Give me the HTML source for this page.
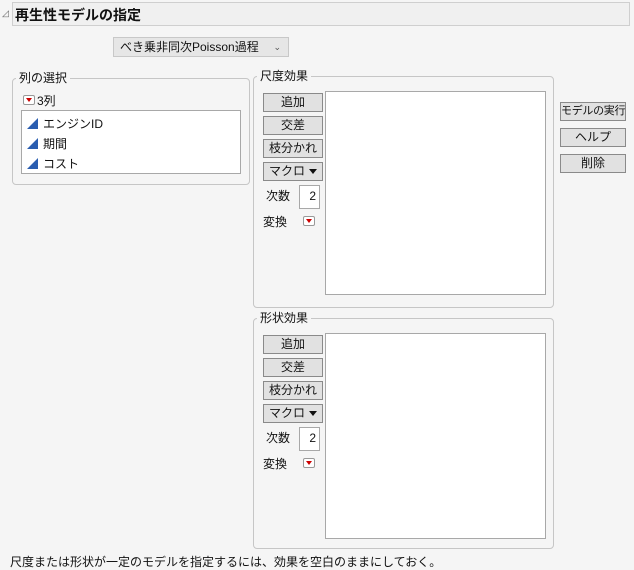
<!DOCTYPE html>
<html><head><meta charset="utf-8"><style>
body{margin:0;width:634px;height:570px;background:#f5f5f5;font-family:"Liberation Sans","Noto Sans CJK JP",sans-serif;font-size:12px;color:#111;position:relative;overflow:hidden}
.a{position:absolute}
.hdr{left:12px;top:2px;width:618px;height:24px;background:#f0f0f0;border:1px solid #cfcfcf;font-weight:bold;font-size:14px;line-height:24px;padding-left:2px;box-sizing:border-box}
.grp{border:1px solid #c6c6c6;border-radius:4px;box-sizing:border-box}
.lbl{background:#f5f5f5;padding:0 3px;font-size:12px;line-height:14px}
.btn{background:#e1e1e1;border:1px solid #8a8a8a;box-sizing:border-box;text-align:center;line-height:16px;font-size:12px;white-space:nowrap;overflow:hidden}
.box{background:#fff;border:1px solid #a8a8a8;box-sizing:border-box}
.tri{display:inline-block;width:0;height:0;border-left:4px solid transparent;border-right:4px solid transparent;border-top:5px solid #111;vertical-align:middle;margin-left:4px}
.rt{width:12px;height:10px;border:1px solid #999;border-radius:2px;background:#fff;box-sizing:border-box}
.rt:after{content:"";position:absolute;left:2px;top:2px;border-left:3px solid transparent;border-right:3px solid transparent;border-top:4px solid #c00}
.ic{display:inline-block;width:0;height:0;border-left:11px solid transparent;border-bottom:11px solid #2a5db0;vertical-align:-1px;margin-right:5px}
</style></head><body>
<div class="a" style="left:2px;top:8px;font-size:9px;color:#666">◿</div>
<div class="a hdr">再生性モデルの指定</div>
<div class="a" style="left:113px;top:37px;width:176px;height:20px;background:#e6e6e6;border:1px solid #c8c8c8;box-sizing:border-box;line-height:18px;padding-left:6px">べき乗非同次Poisson過程<span class="a" style="right:7px;top:0;font-size:9px;color:#555">⌄</span></div>

<div class="a grp" style="left:12px;top:78px;width:238px;height:107px"></div>
<div class="a lbl" style="left:16px;top:71px">列の選択</div>
<div class="a rt" style="left:23px;top:95px"></div>
<div class="a" style="left:37px;top:92px">3列</div>
<div class="a box" style="left:21px;top:110px;width:220px;height:64px;padding:3px 5px;line-height:20px">
<div><span class="ic"></span>エンジンID</div><div><span class="ic"></span>期間</div><div><span class="ic"></span>コスト</div></div>

<div class="a grp" style="left:253px;top:76px;width:301px;height:232px"></div>
<div class="a lbl" style="left:257px;top:69px">尺度効果</div>
<div class="a btn" style="left:263px;top:93px;width:60px;height:19px">追加</div>
<div class="a btn" style="left:263px;top:116px;width:60px;height:19px">交差</div>
<div class="a btn" style="left:263px;top:139px;width:60px;height:19px">枝分かれ</div>
<div class="a btn" style="left:263px;top:162px;width:60px;height:19px">マクロ<span class="tri"></span></div>
<div class="a" style="left:266px;top:187px">次数</div>
<div class="a box" style="left:299px;top:185px;width:21px;height:24px;text-align:right;padding:3px 3px 0 0">2</div>
<div class="a" style="left:263px;top:213px">変換</div>
<div class="a rt" style="left:303px;top:216px"></div>
<div class="a box" style="left:325px;top:91px;width:221px;height:204px"></div>

<div class="a btn" style="left:560px;top:102px;width:66px;height:19px;font-size:11px;letter-spacing:-0.3px">モデルの実行</div>
<div class="a btn" style="left:560px;top:128px;width:66px;height:19px">ヘルプ</div>
<div class="a btn" style="left:560px;top:154px;width:66px;height:19px">削除</div>

<div class="a grp" style="left:253px;top:318px;width:301px;height:231px"></div>
<div class="a lbl" style="left:257px;top:311px">形状効果</div>
<div class="a btn" style="left:263px;top:335px;width:60px;height:19px">追加</div>
<div class="a btn" style="left:263px;top:358px;width:60px;height:19px">交差</div>
<div class="a btn" style="left:263px;top:381px;width:60px;height:19px">枝分かれ</div>
<div class="a btn" style="left:263px;top:404px;width:60px;height:19px">マクロ<span class="tri"></span></div>
<div class="a" style="left:266px;top:429px">次数</div>
<div class="a box" style="left:299px;top:427px;width:21px;height:24px;text-align:right;padding:3px 3px 0 0">2</div>
<div class="a" style="left:263px;top:455px">変換</div>
<div class="a rt" style="left:303px;top:458px"></div>
<div class="a box" style="left:325px;top:333px;width:221px;height:206px"></div>

<div class="a" style="left:10px;top:553px">尺度または形状が一定のモデルを指定するには、効果を空白のままにしておく。</div>
</body></html>
